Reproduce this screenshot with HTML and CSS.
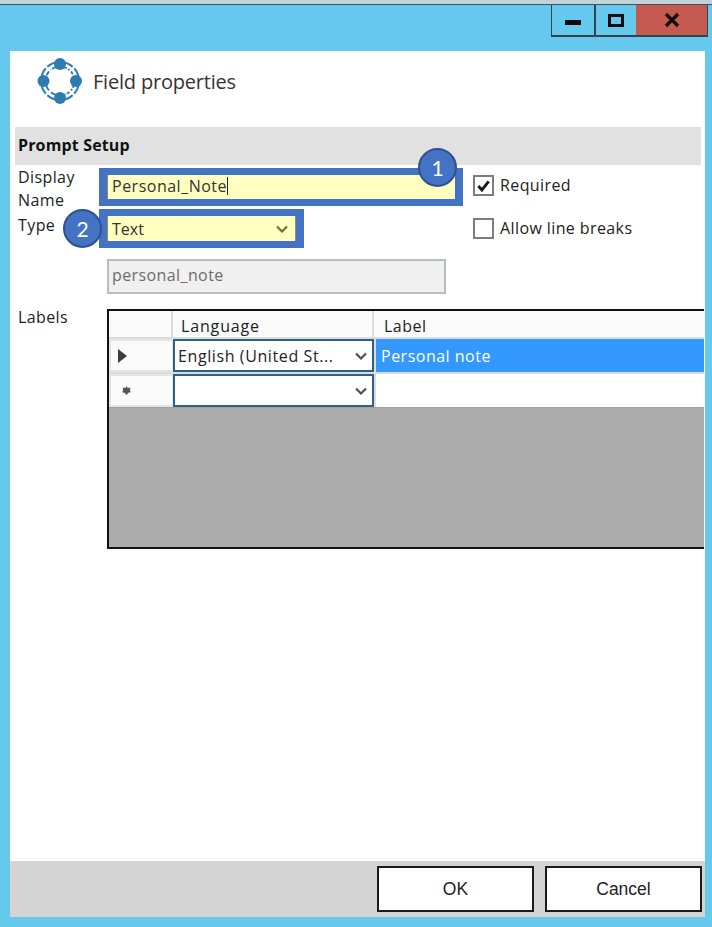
FILE: index.html
```html
<!DOCTYPE html>
<html lang="en">
<head>
    <meta charset="UTF-8">
    <title>Field properties</title>
    <link rel="stylesheet" href="styles.css">
</head>
<body>
    <div class="window">
        <!-- title bar -->
        <div class="titlebar">
            <div class="win-controls">
                <div class="win-btn win-min"><span class="min-glyph"></span></div>
                <div class="win-btn win-max"><span class="max-glyph"></span></div>
                <div class="win-btn win-close">
                    <svg width="16" height="14" viewBox="0 0 16 14"><path d="M2 1l12 12M14 1L2 13" stroke="#111" stroke-width="3.4" fill="none"/></svg>
                </div>
            </div>
        </div>

        <div class="panel">
            <div class="dialog-head">
                <svg class="logo" width="48" height="48" viewBox="0 0 48 48">
                    <g fill="none" stroke="#2e7bb2">
                        <circle cx="24" cy="24" r="19" stroke-width="2"/>
                        <circle cx="24" cy="24" r="14.500" stroke-width="1.800" stroke-dasharray="7 1.500"/>
                    </g>
                    <!-- white cuts through the ring -->
                    <path d="M8 8L15 15M40 8L33 15M8 40L15 33M40 40L33 33" stroke="white" stroke-width="2" fill="none"/>
                    <g fill="#2e7bb2">
                        <circle cx="24" cy="7" r="6"/>
                        <circle cx="7.500" cy="24" r="6"/>
                        <circle cx="40" cy="24" r="6"/>
                        <circle cx="24" cy="41" r="6"/>
                    </g>
                </svg>
                <span class="dialog-title">Field properties</span>
            </div>

            <div class="section-title">Prompt Setup</div>

            <div class="form">
                <!-- row 1 -->
                <div class="form-label label-name">Display Name</div>
                <div class="highlight highlight-name">
                    <div class="field-yellow field-name">Personal_Note<span class="caret"></span></div>
                    <span class="badge badge-one">1</span>
                </div>
                <label class="check check-required">
                    <span class="check-box">
                        <svg width="18" height="18" viewBox="0 0 18 18"><path d="M3.500 9l3.800 4.200L14.500 4" stroke="#1c1c1c" stroke-width="3" fill="none"/></svg>
                    </span>
                    <span class="check-text">Required</span>
                </label>

                <!-- row 2 -->
                <div class="form-label label-type">Type</div>
                <div class="highlight highlight-type">
                    <div class="field-yellow field-combo">
                        Text
                        <svg width="12" height="8" viewBox="0 0 12 8"><path d="M1 1.500l5 5 5-5" stroke="#6f6f3c" stroke-width="2.200" fill="none"/></svg>
                    </div>
                    <span class="badge badge-two">2</span>
                </div>
                <label class="check check-breaks">
                    <span class="check-box"></span>
                    <span class="check-text">Allow line breaks</span>
                </label>

                <!-- row 3 -->
                <div class="field-key">personal_note</div>

                <!-- row 4 -->
                <div class="form-label label-labels">Labels</div>
                <div class="labels-grid">
                    <div class="grid-inner">
                        <div class="cell head-corner"></div>
                        <div class="cell head-cell">Language</div>
                        <div class="cell head-cell head-label">Label</div>

                        <div class="cell row-head">
                            <svg class="row-arrow" width="9" height="14" viewBox="0 0 9 14"><path d="M0 0l9 7-9 7z" fill="#3c3c3c"/></svg>
                        </div>
                        <div class="cell combo">
                            English (United St...
                            <svg width="12" height="8" viewBox="0 0 12 8"><path d="M1 1.500l5 5 5-5" stroke="#505050" stroke-width="2.200" fill="none"/></svg>
                        </div>
                        <div class="cell value-selected">Personal note</div>

                        <div class="cell row-head">
                            <svg class="row-star" width="9" height="9" viewBox="0 0 9 9"><path d="M4.500 0l1.200 2 2.600-.6-.4 3.100 1 1.700-2.500.6L4.500 9 2.600 6.800.1 6.200l1-1.700-.4-3.100 2.600.6z" fill="#555"/></svg>
                        </div>
                        <div class="cell combo">
                            <svg width="12" height="8" viewBox="0 0 12 8"><path d="M1 1.500l5 5 5-5" stroke="#505050" stroke-width="2.200" fill="none"/></svg>
                        </div>
                        <div class="cell value-empty"></div>
                    </div>
                </div>
            </div>

            <div class="footer">
                <button class="btn">OK</button>
                <button class="btn">Cancel</button>
            </div>
        </div>
    </div>
</body>
</html>
```

FILE: styles.css
```css
* {
    margin: 0;
    padding: 0;
    box-sizing: border-box;
    font-family: 'Open Sans', 'Noto Sans', sans-serif;
}

body {
    width: 712px;
    height: 927px;
    overflow: hidden;
    background-color: #64c9ec;
}

.window {
    height: 927px;
    display: flex;
    flex-direction: column;
    background-color: #64c9ec;
    border-top: 4px solid #c3d2d6;
}

.titlebar {
    height: 47px;
    flex: none;
    display: flex;
    justify-content: flex-end;
    align-items: flex-start;
    padding-right: 4px;
    border-top: 1px solid #3b5560;
}

.win-controls {
    display: flex;
    height: 32px;
    border: 1px solid #33444c;
    border-top: none;
    border-bottom-width: 2px;
}

.win-btn {
    display: flex;
    align-items: center;
    justify-content: center;
}

.win-min {
    width: 44px;
    border-right: 2px solid #33444c;
    padding-top: 4px;
}

.win-max {
    width: 40px;
}

.win-close {
    width: 71px;
    background-color: #c75a50;
}

.min-glyph {
    width: 16px;
    height: 5px;
    background-color: #0c0c0c;
}

.max-glyph {
    width: 16px;
    height: 13px;
    border: 3px solid #0c0c0c;
}

.panel {
    flex: 1;
    display: flex;
    flex-direction: column;
    margin: 0 7px 10px 10px;
    background-color: white;
}

.dialog-head {
    height: 76px;
    flex: none;
    display: flex;
    align-items: center;
    padding: 0 0 16px 26px;
}

.logo {
    flex: none;
}

.dialog-title {
    margin-left: 9px;
    font-size: 20px;
    letter-spacing: -0.2px;
    color: #333;
}

.section-title {
    height: 38px;
    line-height: 36px;
    margin: 0 4px 0 5px;
    padding-left: 3px;
    background-color: #e1e1e1;
    font-size: 16px;
    letter-spacing: 0.15px;
    font-weight: bold;
    color: #111;
}

.form {
    display: grid;
    grid-template-columns: 81px 364px 1fr;
    grid-template-rows: 38px 42px 46px 255px;
    padding: 3px 0 0 8px;
}

.form-label {
    font-size: 16px;
    letter-spacing: 0.4px;
    line-height: 23px;
    color: #222;
}

.label-name {
    margin-top: -2px;
    width: 70px;
}

.label-type {
    padding-top: 8px;
}

.label-labels {
    grid-row: 4;
    margin-top: 12px;
}

.highlight {
    position: relative;
    border: 8px solid #4472c4;
    border-top-width: 7px;
    border-bottom-width: 7px;
}

.highlight-type {
    width: 205px;
    margin-top: 3px;
}

.field-yellow {
    height: 100%;
    display: flex;
    align-items: center;
    padding-left: 4px;
    background-color: #ffffc0;
    border-left: 1px solid #8f8f55;
    font-size: 16px;
    letter-spacing: 0.5px;
    color: #333;
}

.field-name {
    padding-bottom: 3px;
}

.field-combo {
    justify-content: space-between;
    padding-right: 7px;
    border-right: 1px solid #8f8f55;
    letter-spacing: 0;
}

.caret {
    width: 1px;
    height: 18px;
    background-color: #222;
}

.badge {
    position: absolute;
    width: 39px;
    height: 39px;
    display: flex;
    align-items: center;
    justify-content: center;
    background-color: #4472c4;
    border: 2px solid #2f528f;
    border-radius: 50%;
    font-family: 'Lato', sans-serif;
    font-size: 21px;
    color: white;
}

.badge-one {
    left: 311px;
    top: -27px;
}

.badge-two {
    left: -44px;
    top: -7px;
}

.check {
    display: flex;
    align-items: center;
    gap: 6px;
    height: 21px;
    margin-left: 10px;
    font-size: 16px;
    letter-spacing: 0.4px;
    color: #222;
}

.check-required {
    margin-top: 7px;
}

.check-breaks {
    margin-top: 12px;
}

.check-text {
    padding-bottom: 2px;
}

.check-box {
    width: 21px;
    height: 21px;
    flex: none;
    display: flex;
    align-items: center;
    justify-content: center;
    border: 2px solid #7d7d7d;
    background-color: white;
}

.field-key {
    grid-row: 3;
    grid-column: 2;
    width: 339px;
    height: 35px;
    margin: 11px 0 0 8px;
    padding-left: 3px;
    line-height: 28px;
    background-color: #f0f0f0;
    border: 2px solid #b8bcbd;
    font-size: 16px;
    letter-spacing: 0.4px;
    color: #6d6d6d;
}

.labels-grid {
    grid-row: 4;
    grid-column: 2 / 4;
    height: 240px;
    margin: 15px 1px 0 8px;
    background-color: #ababab;
    border: 2px solid #111;
    border-right: none;
    overflow: hidden;
}

.grid-inner {
    display: grid;
    grid-template-columns: 64px 201px 1fr;
    grid-template-rows: 26px 33px 33px;
    row-gap: 2px;
    background-color: #dcdcdc;
    border-bottom: 1px solid #a0a0a0;
}

.cell {
    display: flex;
    align-items: center;
    font-size: 16px;
    letter-spacing: 0.6px;
    color: #222;
}

.head-corner {
    background-color: #fafafa;
    border-right: 2px solid #dcdcdc;
}

.head-cell {
    padding: 3px 0 0 8px;
    background-color: #fafafa;
    border-right: 2px solid #dcdcdc;
    letter-spacing: 0.85px;
}

.head-label {
    padding-left: 10px;
    border-right: none;
    letter-spacing: 0.5px;
}

.row-head {
    background-color: #fafafa;
    border: 2px solid #e4e4e4;
    border-right-width: 1px;
}

.row-arrow {
    margin-left: 7px;
}

.row-star {
    margin-left: 11px;
}

.combo {
    padding: 0 5px 0 3px;
    background-color: white;
    border: 2px solid #2f6187;
}

.combo svg {
    margin-left: auto;
}

.value-selected {
    padding-left: 5px;
    background-color: #3399ff;
    border-left: 2px solid #dcdcdc;
    letter-spacing: 0.5px;
    color: white;
}

.value-empty {
    background-color: white;
    border-left: 2px solid #dcdcdc;
}

.footer {
    margin-top: auto;
    height: 56px;
    flex: none;
    display: flex;
    justify-content: flex-end;
    gap: 11px;
    padding: 5px 3px 5px 0;
    background-color: #d4d4d4;
}

.btn {
    width: 157px;
    background-color: white;
    border: 2px solid #1a1a1a;
    font-family: 'Liberation Sans', sans-serif;
    font-size: 17.5px;
    color: #222;
}
```
